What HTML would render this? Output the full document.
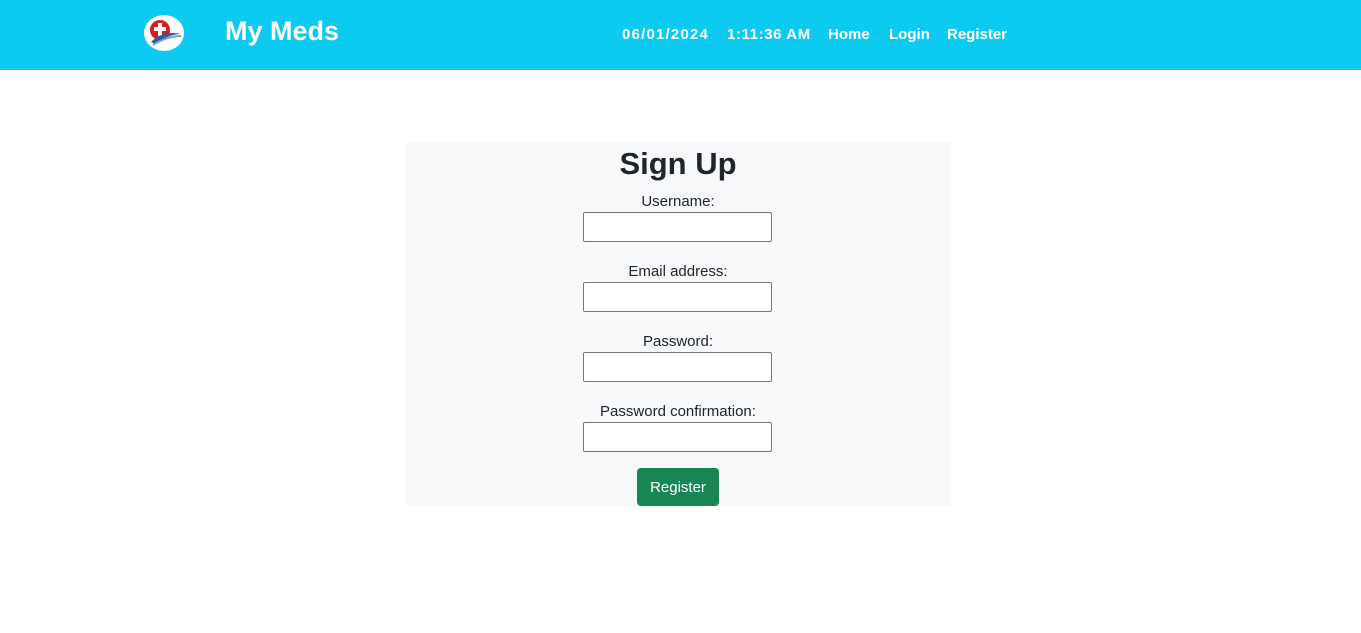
<!DOCTYPE html>
<html><head><meta charset="utf-8"><style>
body{margin:0;width:1361px;height:633px;background:#fff;font-family:"Liberation Sans",sans-serif;color:#212529;position:relative;overflow:hidden}
.nav{position:absolute;left:0;top:0;width:1361px;height:70px;background:#0dcaf0}
.brand{position:absolute;left:225px;top:16px;font-size:27px;font-weight:bold;color:#fff}
.links{position:absolute;top:26px;font-size:15px;font-weight:bold;color:#fff}
.box{position:absolute;left:405px;top:142px;width:546px;height:364px;background:#f8f9fa}
h1{position:absolute;left:0;width:546px;top:4px;margin:0;text-align:center;font-size:31px;font-weight:bold}
.lbl{position:absolute;left:0;width:546px;text-align:center;font-size:15px}
.in{position:absolute;left:178px;width:187px;height:28px;border:1px solid #767676;border-radius:2px;background:#fff}
.btn{position:absolute;left:232px;top:326px;width:82px;height:38px;background:#198754;border-radius:4px;color:#fff;font-size:15px;text-align:center;line-height:40px}
</style></head><body>
<div class="nav">
<svg style="position:absolute;left:143px;top:14px" width="42" height="38" viewBox="0 0 42 38">
<ellipse cx="21" cy="19" rx="20" ry="18" fill="#fff"/>
<circle cx="17" cy="16" r="10" fill="#d42020"/>
<rect x="15" y="9" width="4" height="13" fill="#fff"/><rect x="11" y="13" width="12" height="4" fill="#fff"/>
<path d="M8 28 Q20 16 38 20 Q26 20 12 30Z" fill="#2a5aa8"/>
<path d="M10 31 Q24 22 38 22" stroke="#7aa0d8" stroke-width="2" fill="none"/>
</svg>
<div class="brand">My Meds</div>
<div class="links" style="left:622px;letter-spacing:1.2px">06/01/2024</div>
<div class="links" style="left:727px;letter-spacing:0.6px">1:11:36 AM</div>
<div class="links" style="left:828px">Home</div>
<div class="links" style="left:889px">Login</div>
<div class="links" style="left:947px">Register</div>
</div>
<div class="box">
<h1>Sign Up</h1>
<div class="lbl" style="top:51px">Username:</div><div class="in" style="top:70px"></div>
<div class="lbl" style="top:121px">Email address:</div><div class="in" style="top:140px"></div>
<div class="lbl" style="top:191px">Password:</div><div class="in" style="top:210px"></div>
<div class="lbl" style="top:261px">Password confirmation:</div><div class="in" style="top:280px"></div>
<div class="btn">Register</div>
</div>
</body></html>
